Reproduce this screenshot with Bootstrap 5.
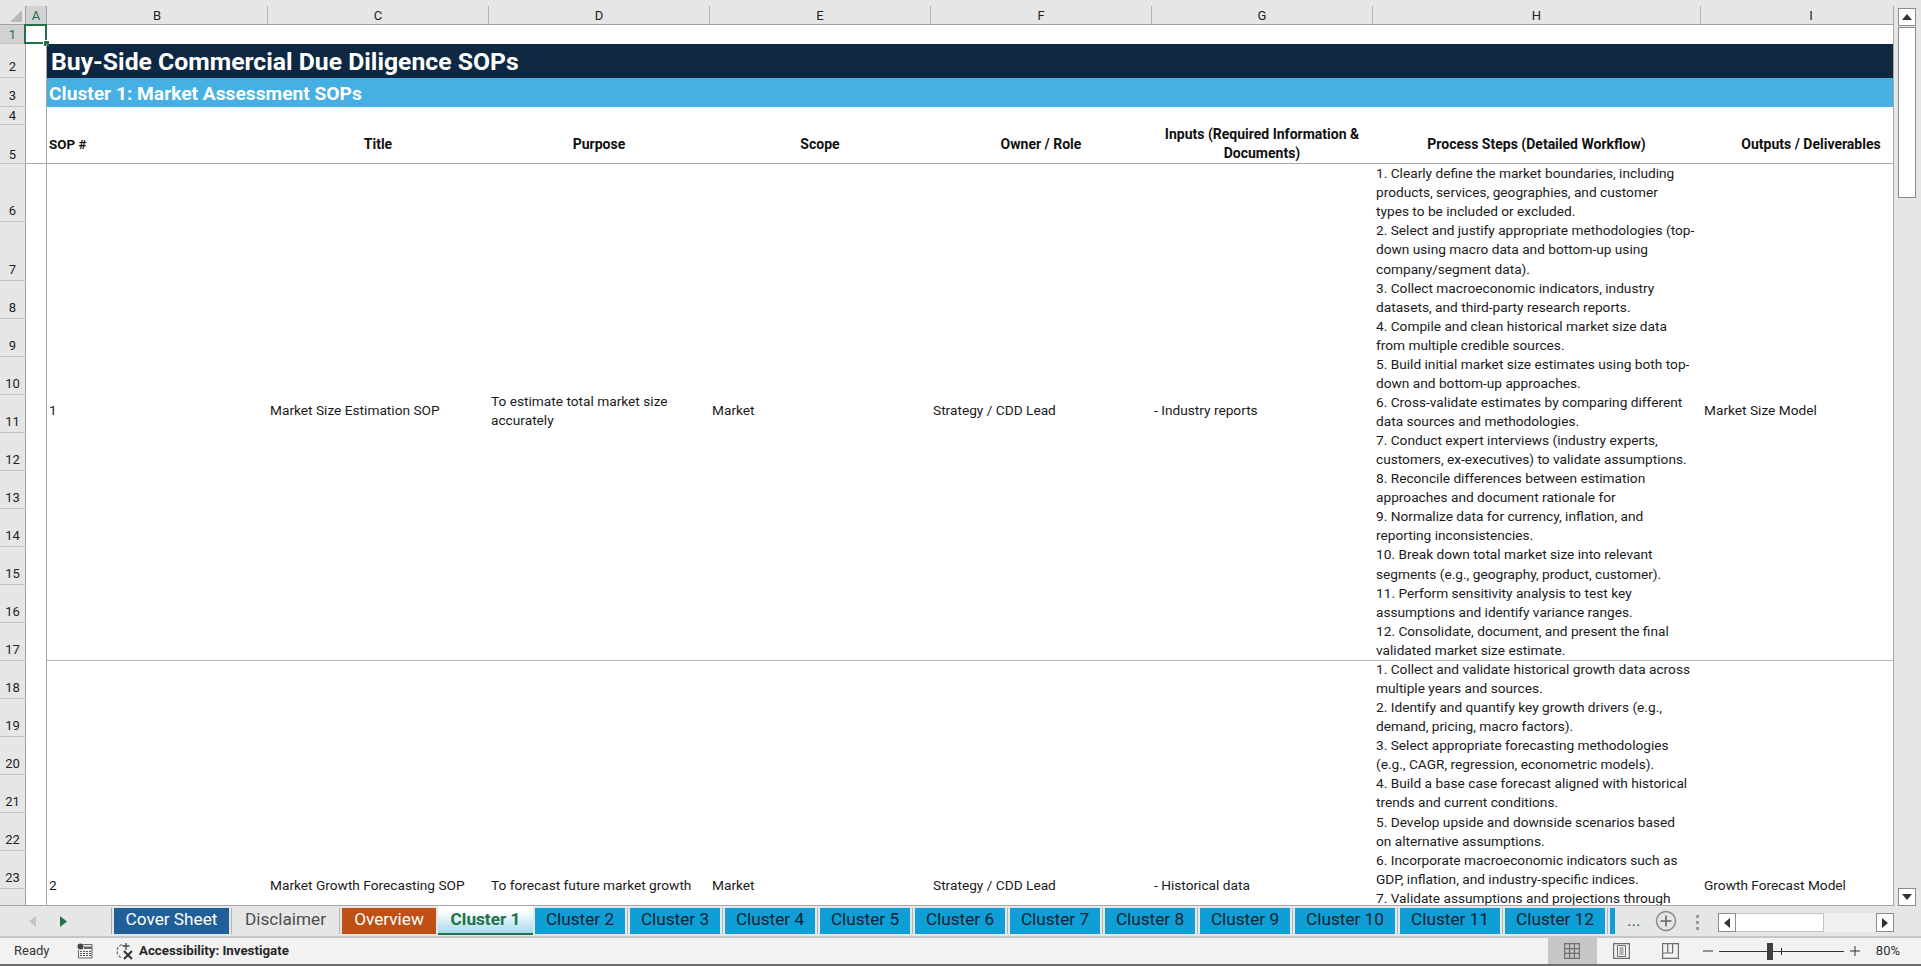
<!DOCTYPE html>
<html lang="en">

<head>
    <meta charset="UTF-8">
    <meta name="viewport" content="width=device-width, initial-scale=1.0">
    <title>Buy-Side Commercial Due Diligence SOPs</title>
    <link href="https://cdn.jsdelivr.net/npm/bootstrap@5.3.0/dist/css/bootstrap.min.css" rel="stylesheet">
    <style>
        body { font-family: Roboto, "Noto Sans", sans-serif; font-size: 13.7px; color: #1a1a1a; background: #e6e6e6; overflow: hidden; }
        .xl-app { height: 966px; width: 1921px; }
        .xl-sheet { height: 906px; padding-top: 6px; background: #e6e6e6; }
        .xl-grid-wrap { width: 1894px; overflow: hidden; background: #fff; border-bottom: 1px solid #a6a6a6; border-right: 1px solid #a6a6a6; }
        .xl-grid { table-layout: fixed; width: 1922px; border-collapse: separate; border-spacing: 0; }
        .xl-grid td, .xl-grid th { padding: 0 3px 0 2px; line-height: 19px; font-weight: 400; white-space: nowrap; }
        .xl-grid th.col-h { height: 19px; padding: 1px 0 0; background: #e6e6e6; border-right: 1px solid #b4b4b4; border-bottom: 1px solid #a0a0a0; text-align: center; font-size: 13px; color: #222; line-height: 17px; }
        .xl-grid th.col-h.cur { background: #d2d2d2; color: #217346; border-right-color: #a0a0a0; }
        .xl-grid th.corner { background: #e6e6e6; border-right: 1px solid #a0a0a0; border-bottom: 1px solid #a0a0a0; padding: 0; line-height: 0; }
        .corner svg { display: block; margin-left: 9px; margin-top: 2px; }
        .xl-grid th.row-h { background: #e6e6e6; border-right: 1px solid #a0a0a0; border-bottom: 1px solid #c4c4c4; text-align: center; vertical-align: bottom; padding: 0 0 3px; line-height: 15px; font-size: 13px; color: #222; }
        .xl-grid th.row-h.row-low { padding-bottom: 0; line-height: 17px; }
        .xl-grid th.row-h.cur { background: #d2d2d2; color: #217346; }
        .col-a { border-right: 1px solid #a8a8a8; position: relative; }
        .sel-box { position: absolute; left: -2px; top: -1px; right: -1px; bottom: 0; border: 2px solid #217346; }
        .sel-box::after { content: ""; position: absolute; right: -4px; bottom: -4px; width: 6px; height: 6px; background: #217346; border: 1px solid #fff; border-width: 1px 0 0 1px; }
        .xl-grid td.band-title { background: #0e2841; color: #fff; font-weight: 700; font-size: 24.75px; padding: 1px 0 0 4px; vertical-align: middle; }
        .xl-grid td.band-sub { background: #45b0e1; color: #fff; font-weight: 700; font-size: 19.2px; padding-top: 1px; vertical-align: middle; }
        .xl-grid td.head-cell { font-weight: 700; font-size: 14px; color: #111; text-align: center; vertical-align: middle; white-space: normal; border-bottom: 1px solid #a8a8a8; }
        .xl-grid td.head-cell.text-start { text-align: left; font-size: 13.4px; }
        .xl-grid td.row-rule { border-bottom: 1px solid #b8b8b8; vertical-align: middle; padding-bottom: 3px; }
        .xl-grid td.out-cell { padding-left: 3px; }
        .xl-grid td.proc-cell { padding-left: 3px; padding-bottom: 0; line-height: 19.06px; }
        .xl-grid td.steps-top { vertical-align: top; }
        .steps-lift { margin-top: -1px; }
        .xl-vscroll { width: 27px; padding: 2px 5px 0 4px; }
        .vs-btn { height: 18px; background: #fff; border: 1px solid #8c8c8c; }
        .vs-thumb { height: 171px; margin-top: 1px; background: #fff; border: 1px solid #8c8c8c; }
        .xl-tabbar { height: 32px; background: #e6e6e6; border-bottom: 2px solid #c6c6c6; padding-top: 2px; }
        .tab-nav { width: 112px; border-right: 1px solid #a8a8a8; height: 26px; }
        .tab-slot { height: 26px; padding: 0 2px; border-right: 1px solid #b3b3b3; }
        .tab-slot.active-slot { padding: 0; border-right: 0; margin-top: -2px; height: 29px; }
        .sheet-tab { height: 26px; line-height: 23px; font-size: 17.2px; text-align: center; }
        .tab-blue { width: 90px; background: #0f9ed5; color: #0b2430; }
        .tab-blue.tab-wide { width: 100px; }
        .tab-cover { width: 115px; background: #215f9a; color: #fff; }
        .tab-plain { width: 103px; color: #4d4d4d; }
        .tab-over { width: 94px; background: #c04f15; color: #fff; }
        .sheet-tab.tab-active { width: 95px; height: 29px; line-height: 27px; font-weight: 700; color: #217346; background: linear-gradient(#fff 20%, #a6d9ef); border-bottom: 2px solid #217346; }
        .tab-sliver { width: 5px; height: 26px; margin-left: 2px; background: #0f9ed5; }
        .tab-more { color: #217346; font-size: 17px; line-height: 24px; margin-left: 12px; width: 20px; }
        .tab-plus { margin-left: 8px; margin-top: 2px; }
        .tab-dots { width: 3px; margin-left: 19px; margin-right: 19px; padding-top: 7px; }
        .tab-dots i { display: block; width: 3px; height: 3px; margin-bottom: 3px; background: #9a9a9a; }
        .hs-track { width: 176px; height: 19px; background: #f0f0f0; margin-top: 5px; }
        .hs-btn { width: 18px; height: 19px; background: #fff; border: 1px solid #8c8c8c; }
        .hs-thumb { width: 88px; height: 19px; background: #fff; border: 1px solid #c4c4c4; border-left: 0; }
        .xl-status { height: 28px; background: #f2f2f2; border-bottom: 2px solid #6e6e6e; font-size: 13px; color: #333; }
        .st-ready { margin-left: 14px; width: 63px; }
        .st-acc-ico { margin-left: 22px; }
        .st-acc { font-weight: 700; margin-left: 4px; font-size: 13.3px; color: #262626; }
        .st-right { margin-right: 21px; }
        .view-btn { height: 26px; width: 49px; }
        .view-on { background: #c6c6c6; }
        .st-minus { margin-left: 8px; }
        .st-zoom { width: 125px; height: 1px; background: #333; position: relative; margin: 0 6px; }
        .zoom-thumb { position: absolute; left: 48px; top: -8px; width: 6px; height: 17px; background: #404040; }
        .zoom-tick { position: absolute; left: 62px; top: -3px; width: 1px; height: 7px; background: #333; }
    </style>
</head>

<body>
    <div class="xl-app d-flex flex-column">
        <div class="xl-sheet d-flex">
            <div class="xl-grid-wrap">
                <table class="xl-grid">
                    <colgroup>
                        <col style="width:26px"><col style="width:21px"><col style="width:221px"><col style="width:221px"><col style="width:221px"><col style="width:221px"><col style="width:221px"><col style="width:221px"><col style="width:328px"><col style="width:221px">
                    </colgroup>
                    <tr>
                        <th class="corner"><svg width="15" height="15" viewBox="0 0 15 15"><path d="M13 1v12H1z" fill="#b9b9b9"/></svg></th>
                        <th class="col-h cur">A</th><th class="col-h">B</th><th class="col-h">C</th><th class="col-h">D</th><th class="col-h">E</th><th class="col-h">F</th><th class="col-h">G</th><th class="col-h">H</th><th class="col-h">I</th>
                    </tr>
                    <tr style="height:19px"><th class="row-h row-low cur">1</th><td class="col-a"><div class="sel-box"></div></td><td colspan="8"></td></tr>
                    <tr style="height:34px"><th class="row-h">2</th><td class="col-a"></td><td colspan="8" class="band-title">Buy-Side Commercial Due Diligence SOPs</td></tr>
                    <tr style="height:29px"><th class="row-h">3</th><td class="col-a"></td><td colspan="8" class="band-sub">Cluster 1: Market Assessment SOPs</td></tr>
                    <tr style="height:18px"><th class="row-h row-low">4</th><td class="col-a"></td><td colspan="8"></td></tr>
                    <tr style="height:38px">
                        <th class="row-h row-low">5</th><td class="col-a" style="border-bottom:1px solid #a8a8a8"></td>
                        <td class="head-cell text-start">SOP #</td><td class="head-cell">Title</td><td class="head-cell">Purpose</td><td class="head-cell">Scope</td><td class="head-cell">Owner / Role</td><td class="head-cell">Inputs (Required Information &amp; Documents)</td><td class="head-cell">Process Steps (Detailed Workflow)</td><td class="head-cell">Outputs / Deliverables</td>
                    </tr>
                    <tr style="height:58px">
                        <th class="row-h">6</th><td class="col-a"></td>
                        <td rowspan="12" class="row-rule">1</td>
                        <td rowspan="12" class="row-rule">Market Size Estimation SOP</td>
                        <td rowspan="12" class="row-rule">To estimate total market size<br>accurately</td>
                        <td rowspan="12" class="row-rule">Market</td>
                        <td rowspan="12" class="row-rule">Strategy / CDD Lead</td>
                        <td rowspan="12" class="row-rule">- Industry reports</td>
                        <td rowspan="12" class="row-rule proc-cell">1. Clearly define the market boundaries, including<br>products, services, geographies, and customer<br>types to be included or excluded.<br>2. Select and justify appropriate methodologies (top-<br>down using macro data and bottom-up using<br>company/segment data).<br>3. Collect macroeconomic indicators, industry<br>datasets, and third-party research reports.<br>4. Compile and clean historical market size data<br>from multiple credible sources.<br>5. Build initial market size estimates using both top-<br>down and bottom-up approaches.<br>6. Cross-validate estimates by comparing different<br>data sources and methodologies.<br>7. Conduct expert interviews (industry experts,<br>customers, ex-executives) to validate assumptions.<br>8. Reconcile differences between estimation<br>approaches and document rationale for<br>9. Normalize data for currency, inflation, and<br>reporting inconsistencies.<br>10. Break down total market size into relevant<br>segments (e.g., geography, product, customer).<br>11. Perform sensitivity analysis to test key<br>assumptions and identify variance ranges.<br>12. Consolidate, document, and present the final<br>validated market size estimate.</td>
                        <td rowspan="12" class="row-rule out-cell">Market Size Model</td>
                    </tr>
                    <tr style="height:59px"><th class="row-h">7</th><td class="col-a"></td></tr>
                    <tr style="height:38px"><th class="row-h">8</th><td class="col-a"></td></tr>
                    <tr style="height:38px"><th class="row-h">9</th><td class="col-a"></td></tr>
                    <tr style="height:38px"><th class="row-h">10</th><td class="col-a"></td></tr>
                    <tr style="height:38px"><th class="row-h">11</th><td class="col-a"></td></tr>
                    <tr style="height:38px"><th class="row-h">12</th><td class="col-a"></td></tr>
                    <tr style="height:38px"><th class="row-h">13</th><td class="col-a"></td></tr>
                    <tr style="height:38px"><th class="row-h">14</th><td class="col-a"></td></tr>
                    <tr style="height:38px"><th class="row-h">15</th><td class="col-a"></td></tr>
                    <tr style="height:38px"><th class="row-h">16</th><td class="col-a"></td></tr>
                    <tr style="height:38px"><th class="row-h">17</th><td class="col-a"></td></tr>
                    <tr style="height:38px">
                        <th class="row-h">18</th><td class="col-a"></td>
                        <td rowspan="8" class="row-rule">2</td>
                        <td rowspan="8" class="row-rule">Market Growth Forecasting SOP</td>
                        <td rowspan="8" class="row-rule">To forecast future market growth</td>
                        <td rowspan="8" class="row-rule">Market</td>
                        <td rowspan="8" class="row-rule">Strategy / CDD Lead</td>
                        <td rowspan="8" class="row-rule">- Historical data</td>
                        <td rowspan="8" class="row-rule proc-cell steps-top"><div class="steps-lift">1. Collect and validate historical growth data across<br>multiple years and sources.<br>2. Identify and quantify key growth drivers (e.g.,<br>demand, pricing, macro factors).<br>3. Select appropriate forecasting methodologies<br>(e.g., CAGR, regression, econometric models).<br>4. Build a base case forecast aligned with historical<br>trends and current conditions.<br>5. Develop upside and downside scenarios based<br>on alternative assumptions.<br>6. Incorporate macroeconomic indicators such as<br>GDP, inflation, and industry-specific indices.<br>7. Validate assumptions and projections through</div></td>
                        <td rowspan="8" class="row-rule out-cell">Growth Forecast Model</td>
                    </tr>
                    <tr style="height:38px"><th class="row-h">19</th><td class="col-a"></td></tr>
                    <tr style="height:38px"><th class="row-h">20</th><td class="col-a"></td></tr>
                    <tr style="height:38px"><th class="row-h">21</th><td class="col-a"></td></tr>
                    <tr style="height:38px"><th class="row-h">22</th><td class="col-a"></td></tr>
                    <tr style="height:38px"><th class="row-h">23</th><td class="col-a"></td></tr>
                    <tr style="height:38px"><th class="row-h"></th><td class="col-a"></td></tr>
                    <tr style="height:186px"><th class="row-h"></th><td class="col-a"></td></tr>
                </table>
            </div>
            <div class="xl-vscroll d-flex flex-column">
                <div class="vs-btn d-flex align-items-center justify-content-center"><svg width="10" height="6" viewBox="0 0 10 6"><path d="M5 0l5 6H0z" fill="#333"/></svg></div>
                <div class="vs-thumb"></div>
                <div class="flex-grow-1"></div>
                <div class="vs-btn d-flex align-items-center justify-content-center"><svg width="10" height="6" viewBox="0 0 10 6"><path d="M0 0h10L5 6z" fill="#333"/></svg></div>
            </div>
        </div>

        <div class="xl-tabbar d-flex align-items-start">
            <div class="tab-nav d-flex align-items-center">
                <svg style="margin-left:29px" width="7" height="11" viewBox="0 0 7 11"><path d="M7 0v11L0 5.5z" fill="#c4c4c4"/></svg>
                <svg style="margin-left:24px" width="7" height="11" viewBox="0 0 7 11"><path d="M0 0v11l7-5.5z" fill="#217346"/></svg>
            </div>
            <div class="tab-slot"><div class="sheet-tab tab-cover">Cover Sheet</div></div>
            <div class="tab-slot"><div class="sheet-tab tab-plain">Disclaimer</div></div>
            <div class="tab-slot border-0"><div class="sheet-tab tab-over">Overview</div></div>
            <div class="tab-slot active-slot"><div class="sheet-tab tab-active">Cluster 1</div></div>
            <div class="tab-slot"><div class="sheet-tab tab-blue">Cluster 2</div></div>
            <div class="tab-slot"><div class="sheet-tab tab-blue">Cluster 3</div></div>
            <div class="tab-slot"><div class="sheet-tab tab-blue">Cluster 4</div></div>
            <div class="tab-slot"><div class="sheet-tab tab-blue">Cluster 5</div></div>
            <div class="tab-slot"><div class="sheet-tab tab-blue">Cluster 6</div></div>
            <div class="tab-slot"><div class="sheet-tab tab-blue">Cluster 7</div></div>
            <div class="tab-slot"><div class="sheet-tab tab-blue">Cluster 8</div></div>
            <div class="tab-slot"><div class="sheet-tab tab-blue">Cluster 9</div></div>
            <div class="tab-slot"><div class="sheet-tab tab-blue tab-wide">Cluster 10</div></div>
            <div class="tab-slot"><div class="sheet-tab tab-blue tab-wide">Cluster 11</div></div>
            <div class="tab-slot"><div class="sheet-tab tab-blue tab-wide">Cluster 12</div></div>
            <div class="tab-sliver"></div>
            <div class="tab-more">...</div>
            <svg class="tab-plus" width="22" height="22" viewBox="0 0 22 22"><circle cx="11" cy="11" r="9.5" fill="none" stroke="#8a8a8a" stroke-width="1.5"/><path d="M11 5.5v11M5.5 11h11" stroke="#666" stroke-width="1.6"/></svg>
            <div class="tab-dots"><i></i><i></i><i></i></div>
            <div class="hs-track d-flex">
                <div class="hs-btn d-flex align-items-center justify-content-center"><svg width="6" height="10" viewBox="0 0 6 10"><path d="M6 0v10L0 5z" fill="#333"/></svg></div>
                <div class="hs-thumb"></div>
                <div class="flex-grow-1"></div>
                <div class="hs-btn d-flex align-items-center justify-content-center"><svg width="6" height="10" viewBox="0 0 6 10"><path d="M0 0v10l6-5z" fill="#333"/></svg></div>
            </div>
        </div>

        <div class="xl-status d-flex align-items-center">
            <div class="st-ready">Ready</div>
            <svg width="16" height="16" viewBox="0 0 16 16"><circle cx="3.5" cy="3.5" r="3" fill="#444"/><path d="M6.5 1.5H15v13.5H1.5V7" fill="none" stroke="#666"/><path d="M7 3.5h8V6H7z" fill="#666"/><path d="M3 8.5h11M3 10.5h11M3 12.5h11" stroke="#555" stroke-dasharray="2 1"/></svg>
            <svg class="st-acc-ico" width="20" height="20" viewBox="0 0 20 20"><path d="M7 3.5A7 7 0 0 0 6 16.5" fill="none" stroke="#666" stroke-width="1.2" stroke-dasharray="3 1.5"/><path d="M11 2v7M7.5 5h7" stroke="#444" stroke-width="1.3"/><path d="M9 10l8 8M17 10l-8 8" stroke="#333" stroke-width="2"/></svg>
            <div class="st-acc">Accessibility: Investigate</div>
            <div class="st-right ms-auto d-flex align-items-center">
                <div class="view-btn view-on d-flex align-items-center justify-content-center"><svg width="16" height="16" viewBox="0 0 16 16"><path d="M.6.6h14.8v14.8H.6zM5.6.6v14.8M10.4.6v14.8M.6 5.6h14.8M.6 10.4h14.8" fill="none" stroke="#6e6e6e" stroke-width="1.2"/></svg></div>
                <div class="view-btn d-flex align-items-center justify-content-center"><svg width="17" height="16" viewBox="0 0 17 16"><path d="M.6.6h15.8v14.8H.6z" fill="none" stroke="#6e6e6e" stroke-width="1.2"/><path d="M4.5 2.5h8v11h-8zM6.5 5h4M6.5 7h4M6.5 9h4M6.5 11h4" fill="none" stroke="#6e6e6e"/></svg></div>
                <div class="view-btn d-flex align-items-center justify-content-center"><svg width="17" height="16" viewBox="0 0 17 16"><path d="M.6.6h15.8v14.8H.6zM.6 10h10V.6M5.7.6V10" fill="none" stroke="#6e6e6e" stroke-width="1.2"/></svg></div>
                <svg class="st-minus" width="10" height="10" viewBox="0 0 10 10"><path d="M0 5h10" stroke="#333"/></svg>
                <div class="st-zoom"><div class="zoom-thumb"></div><div class="zoom-tick"></div></div>
                <svg width="10" height="10" viewBox="0 0 10 10"><path d="M0 5h10M5 0v10" stroke="#333"/></svg>
                <div class="ms-3">80%</div>
            </div>
        </div>
    </div>
    <script src="https://cdn.jsdelivr.net/npm/bootstrap@5.3.0/dist/js/bootstrap.bundle.min.js"></script>
</body>

</html>
